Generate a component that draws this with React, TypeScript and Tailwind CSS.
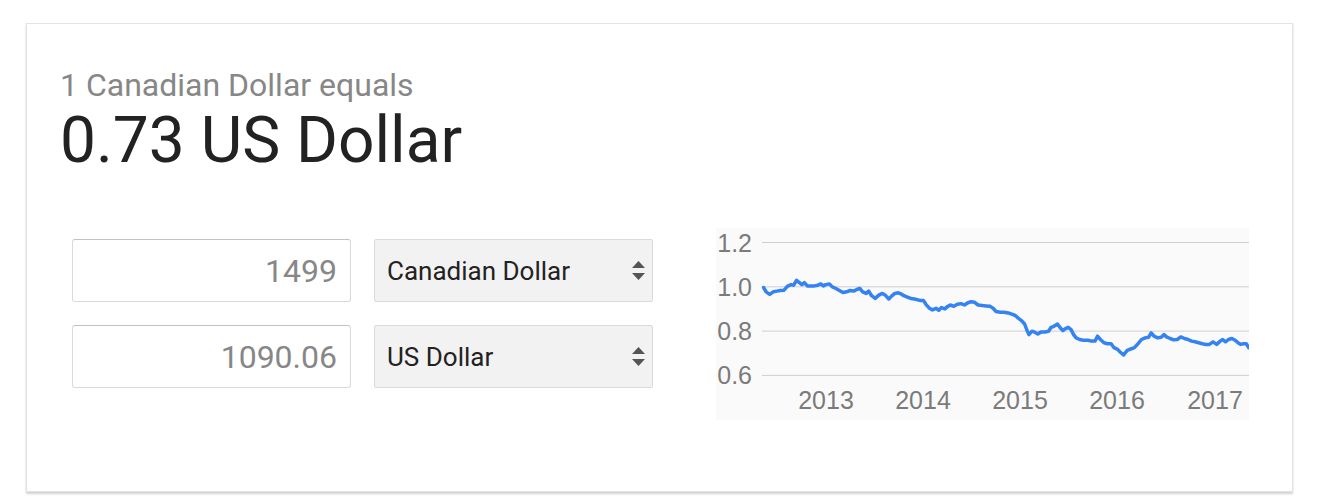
import React from "react";

const RAW: [number, number][] = [
  [178, 187], [185, 200], [195, 208], [205, 200], [215, 198], [225, 196], [235, 195], [245, 183], [255, 178],
  [262, 180], [270, 165], [278, 172], [285, 178], [292, 172], [300, 182], [320, 182], [330, 180], [338, 176],
  [345, 182], [352, 178], [362, 176], [370, 185], [380, 190], [390, 196], [400, 202], [410, 200], [420, 196],
  [430, 198], [440, 192], [447, 190], [455, 200], [465, 205], [472, 198], [480, 212], [490, 220], [500, 210],
  [510, 205], [518, 210], [528, 222], [535, 214], [545, 205], [555, 203], [562, 206], [570, 212], [580, 216],
  [590, 220], [600, 222], [615, 226], [625, 226], [632, 238], [642, 250], [650, 255], [660, 250], [668, 256],
  [675, 248], [685, 252], [692, 245], [700, 240], [710, 244], [720, 238], [730, 236], [740, 240], [748, 234],
  [758, 230], [768, 232], [778, 240], [790, 242], [800, 243], [812, 244], [820, 250], [828, 260], [840, 262],
  [850, 262], [862, 264], [872, 268], [882, 272], [890, 280], [900, 288], [908, 298], [915, 318], [920, 330],
  [928, 320], [935, 322], [945, 328], [955, 322], [965, 322], [975, 320], [982, 308], [990, 305], [1000, 298],
  [1008, 310], [1015, 318], [1022, 312], [1030, 308], [1038, 315], [1045, 330], [1052, 340], [1062, 345],
  [1072, 347], [1085, 347], [1095, 350], [1105, 350], [1112, 335], [1120, 345], [1130, 355], [1140, 358],
  [1150, 358], [1158, 370], [1168, 375], [1175, 383], [1185, 392], [1195, 378], [1205, 374], [1215, 370],
  [1225, 358], [1235, 345], [1245, 340], [1255, 338], [1262, 325], [1270, 335], [1280, 340], [1290, 338],
  [1298, 330], [1305, 337], [1315, 342], [1325, 346], [1335, 345], [1345, 337], [1355, 342], [1365, 345],
  [1375, 350], [1385, 352], [1395, 355], [1405, 358], [1415, 360], [1425, 360], [1435, 352], [1445, 360],
  [1455, 350], [1462, 345], [1470, 352], [1478, 345], [1488, 342], [1498, 348], [1505, 355], [1512, 360],
  [1520, 358], [1528, 358], [1535, 370],
];

const points = RAW.map(([X, Y]) => {
  const x = 700 + X * 0.3575 - 716;
  const y = 226 + Y * 0.329 - 228;
  return `${x.toFixed(1)},${y.toFixed(1)}`;
}).join(" ");

const grid = [
  { label: "1.2", y: 14.5 },
  { label: "1.0", y: 58.8 },
  { label: "0.8", y: 103.1 },
  { label: "0.6", y: 147.4 },
];

const years = [
  { label: "2013", x: 110 },
  { label: "2014", x: 207 },
  { label: "2015", x: 304 },
  { label: "2016", x: 401 },
  { label: "2017", x: 499 },
];

function Chart() {
  return (
    <div className="w-[533px] h-[192px] bg-[#fafafa] shrink-0">
      <svg width="533" height="192" viewBox="0 0 533 192" style={{ fontFamily: "'Liberation Sans', Arial, sans-serif" }}>
        {grid.map((g) => (
          <g key={g.label}>
            <line x1="46" x2="533" y1={g.y} y2={g.y} stroke="#cfcfcf" strokeWidth="1" />
            <text x="36" y={g.y + 9} textAnchor="end" fontSize="25" fill="#7b7b7b">
              {g.label}
            </text>
          </g>
        ))}
        {years.map((yr) => (
          <text key={yr.label} x={yr.x} y="181" textAnchor="middle" fontSize="25" fill="#7b7b7b">
            {yr.label}
          </text>
        ))}
        <polyline points={points} fill="none" stroke="#3583f2" strokeWidth="3.5" strokeLinejoin="round" strokeLinecap="round" />
      </svg>
    </div>
  );
}

function Arrows() {
  return (
    <svg width="13" height="19" viewBox="0 0 13 19" className="shrink-0">
      <polygon points="6.5,0 13,7 0,7" fill="#555" />
      <polygon points="0,12 13,12 6.5,19" fill="#555" />
    </svg>
  );
}

function Row({ amount, currency }: { amount: string; currency: string }) {
  return (
    <div className="flex gap-[23px]">
      <div className="w-[279px] h-[63px] rounded-[3px] border border-[#d9d9d9] border-t-[#c2c2c2] bg-white flex items-center justify-end pr-[13px] text-[32px] leading-[32px] text-[#878787]">
        {amount}
      </div>
      <div className="w-[279px] h-[63px] rounded-[2px] border border-[#dadada] bg-[#f2f2f2] flex items-center justify-between pl-[12px] pr-[7px] text-[26px] leading-[26px] text-[#222]">
        <span>{currency}</span>
        <Arrows />
      </div>
    </div>
  );
}

export default function App() {
  return (
    <div className="bg-white w-[1323px] h-[504px] pt-[23px] pl-[26px]" style={{ fontFamily: "Roboto, 'Liberation Sans', Arial, sans-serif" }}>
      <div className="w-[1267px] h-[469px] bg-white border border-[#e3e3e3] shadow-[0_2px_2px_rgba(0,0,0,0.18)] pt-[45px] pl-[33px]">
        <div className="text-[32px] leading-[32px] text-[#878787]">1 Canadian Dollar equals</div>
        <div className="mt-[8px] text-[64px] leading-[64px] text-[#222]">0.73 US Dollar</div>
        <div className="mt-[55px] flex gap-[63px]">
          <div className="ml-[12px] mt-[11px] flex flex-col gap-[23px]">
            <Row amount="1499" currency="Canadian Dollar" />
            <Row amount="1090.06" currency="US Dollar" />
          </div>
          <Chart />
        </div>
      </div>
    </div>
  );
}
